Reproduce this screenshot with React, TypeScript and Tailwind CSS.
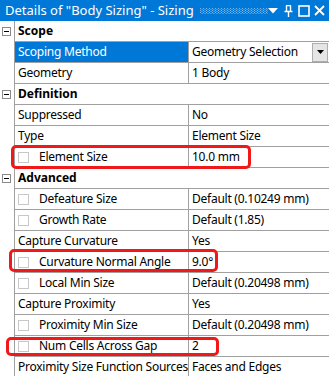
import React from "react";

type Row =
  | { kind: "header"; label: string }
  | { kind: "prop"; label: string; value: string; check?: boolean; selected?: boolean; dropdown?: boolean; mark?: "a" | "b" | "c" };

const rows: Row[] = [
  { kind: "header", label: "Scope" },
  { kind: "prop", label: "Scoping Method", value: "Geometry Selection", selected: true, dropdown: true },
  { kind: "prop", label: "Geometry", value: "1 Body" },
  { kind: "header", label: "Definition" },
  { kind: "prop", label: "Suppressed", value: "No" },
  { kind: "prop", label: "Type", value: "Element Size" },
  { kind: "prop", label: "Element Size", value: "10.0 mm", check: true, mark: "a" },
  { kind: "header", label: "Advanced" },
  { kind: "prop", label: "Defeature Size", value: "Default (0.10249 mm)", check: true },
  { kind: "prop", label: "Growth Rate", value: "Default (1.85)", check: true },
  { kind: "prop", label: "Capture Curvature", value: "Yes" },
  { kind: "prop", label: "Curvature Normal Angle", value: "9.0°", check: true, mark: "b" },
  { kind: "prop", label: "Local Min Size", value: "Default (0.20498 mm)", check: true },
  { kind: "prop", label: "Capture Proximity", value: "Yes" },
  { kind: "prop", label: "Proximity Min Size", value: "Default (0.20498 mm)", check: true },
  { kind: "prop", label: "Num Cells Across Gap", value: "2", check: true, mark: "c" },
  { kind: "prop", label: "Proximity Size Function Sources", value: "Faces and Edges" },
];

function Mark({ m }: { m: "a" | "b" | "c" }) {
  if (m === "a")
    return <div className="pointer-events-none absolute left-[11px] top-[-2px] h-[24px] w-[240px] rounded-[5px] border-[3px] border-[#f01818]" />;
  if (m === "b")
    return <div className="pointer-events-none absolute left-[9px] top-[-3px] h-[23px] w-[209px] rounded-[5px] border-[3px] border-[#f01818]" />;
  return <div className="pointer-events-none absolute left-[6px] top-[1px] h-[19px] w-[213px] rounded-[5px] border-[3px] border-[#f01818]" />;
}

export default function App() {
  return (
    <div
      className="relative h-[376px] w-[329px] overflow-hidden bg-white text-[12px] tracking-[-0.25px] text-black"
      style={{ fontFamily: '"Noto Sans", "Open Sans", sans-serif' }}
    >
      {/* Title bar */}
      <div className="flex h-[21px] items-center bg-[#0078d7] pl-[5px] text-white">
        <span className="whitespace-nowrap text-[13px] leading-none tracking-normal">Details of "Body Sizing" - Sizing</span>
        <svg className="ml-[6px] shrink-0" width="68" height="6" viewBox="0 0 68 6">
          <defs>
            <pattern id="dots" width="3" height="2" patternUnits="userSpaceOnUse">
              <rect x="0" y="0" width="1" height="1" fill="#7fb8ea" />
            </pattern>
            <pattern id="dots2" width="3" height="2" patternUnits="userSpaceOnUse">
              <rect x="1.5" y="1" width="1" height="1" fill="#7fb8ea" />
            </pattern>
          </defs>
          <rect width="68" height="6" fill="url(#dots)" />
          <rect width="68" height="6" fill="url(#dots2)" />
        </svg>
        <div className="flex-1" />
        <svg className="shrink-0" width="10" height="6" viewBox="0 0 10 6">
          <path d="M0 0 H10 L5 5.5 Z" fill="white" />
        </svg>
        <svg className="ml-[6px] shrink-0" width="9" height="12" viewBox="0 0 9 12">
          <path d="M2 0.5 H7 M2.5 0.5 V6 M6.5 0.5 V6 M0.5 6.5 H8.5 M4.5 6.5 V12" stroke="white" strokeWidth="1.4" fill="none" />
        </svg>
        <svg className="ml-[5px] shrink-0" width="12" height="12" viewBox="0 0 12 12">
          <rect x="1" y="1" width="10" height="10" stroke="white" strokeWidth="1.6" fill="none" />
        </svg>
        <svg className="ml-[4px] mr-[6px] shrink-0" width="11" height="11" viewBox="0 0 11 11">
          <path d="M1 1 L10 10 M10 1 L1 10" stroke="white" strokeWidth="1.8" />
        </svg>
      </div>

      {rows.map((r, i) => {
        if (r.kind === "header") {
          return (
            <div key={i} className="flex h-[21px]">
              <div className="flex w-[15px] shrink-0 items-center justify-center border-r border-[#a0a0a0] pr-[2px]">
                <div className="flex h-[9px] w-[9px] items-center justify-center border border-[#8a8a8a] bg-white">
                  <div className="h-px w-[5px] bg-black" />
                </div>
              </div>
              <div className="flex flex-1 items-center border-b border-[#a0a0a0] pl-[3px] font-bold tracking-normal">{r.label}</div>
            </div>
          );
        }
        return (
          <div key={i} className="relative flex h-[21px]">
            <div className="w-[15px] shrink-0 border-r border-[#a0a0a0]" />
            <div
              className={
                "flex w-[174px] shrink-0 items-center overflow-hidden whitespace-nowrap border-b border-r border-[#a0a0a0] pl-[3px] " +
                (r.selected ? "bg-[#0078d7] text-white" : "")
              }
            >
              {r.check && <div className="mr-[10px] h-[11px] w-[11px] shrink-0 border border-[#c8c8c8] bg-white" />}
              <span>{r.label}</span>
            </div>
            <div className="flex flex-1 items-center whitespace-nowrap border-b border-[#a0a0a0] pl-[3px]">
              <span className="flex-1">{r.value}</span>
              {r.dropdown && (
                <div className="mr-px flex h-[19px] w-[16px] items-center justify-center border border-[#adadad] bg-[#e5e5e5]">
                  <svg width="7" height="4" viewBox="0 0 7 4">
                    <path d="M0 0 H7 L3.5 4 Z" fill="black" />
                  </svg>
                </div>
              )}
            </div>
            {r.mark && <Mark m={r.mark} />}
          </div>
        );
      })}
    </div>
  );
}
